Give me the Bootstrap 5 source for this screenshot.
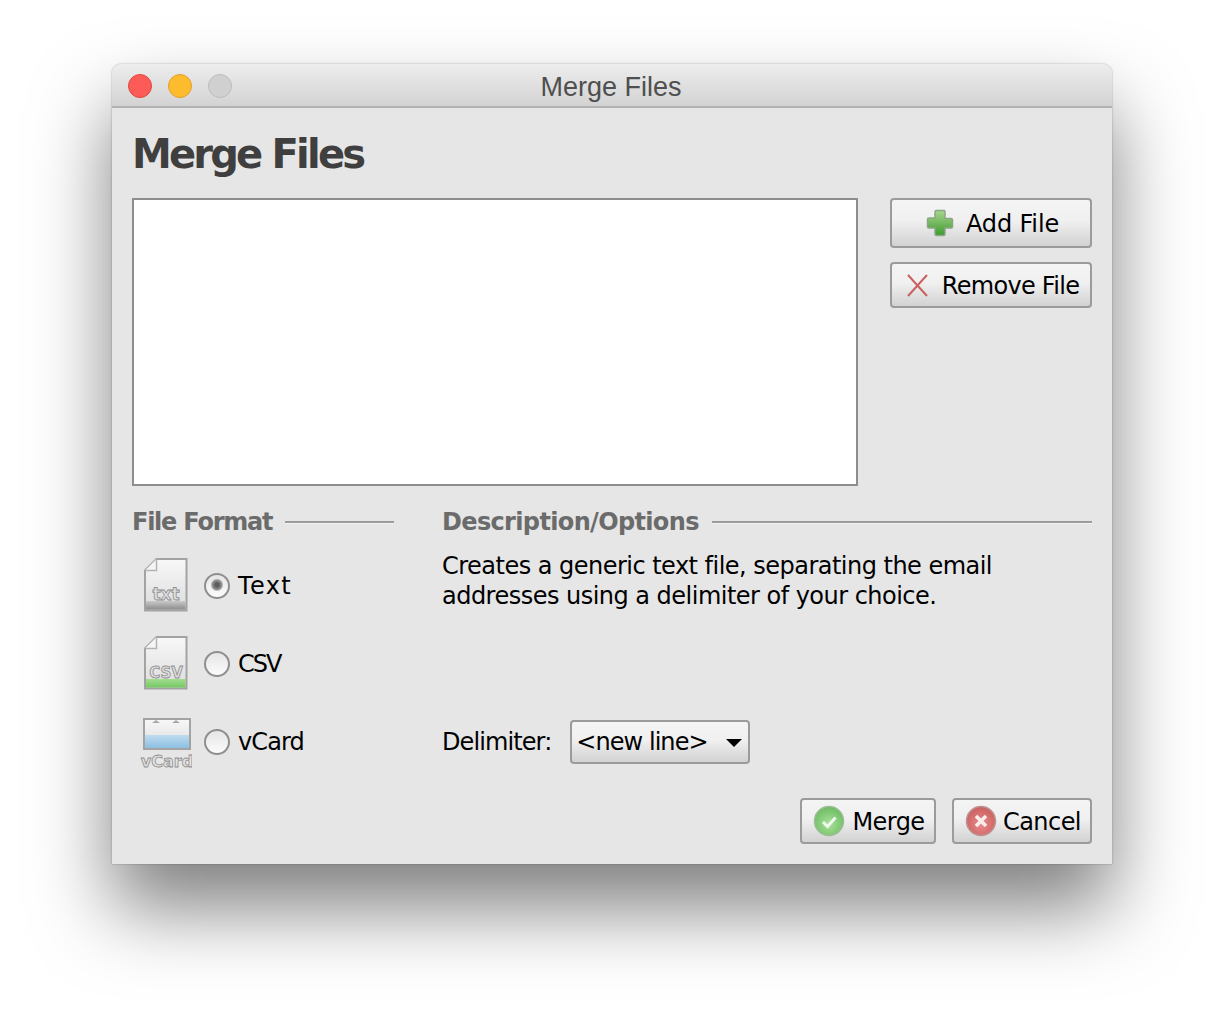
<!doctype html>
<html lang="en"><head><meta charset="utf-8"><title>Merge Files</title>
<link href="https://cdn.jsdelivr.net/npm/bootstrap@5.3.0/dist/css/bootstrap.min.css" rel="stylesheet">
<style>
html,body{height:100%}
body{background:#fff;font-family:"DejaVu Sans","Liberation Sans",sans-serif;padding:64px 112px 0;color:#000}
.win{width:1000px;height:800px;background:#e6e6e6;border-radius:9px 9px 0 0;box-shadow:0 0 2px rgba(0,0,0,.35),0 44px 78px rgba(0,0,0,.5);display:flex;flex-direction:column;overflow:hidden}
.tbar{height:44px;flex:none;background:linear-gradient(#ededed,#d3d3d3);border-bottom:2px solid #b2b2b2;position:relative;padding:2px 0 0 16px;gap:16px}
.light{width:24px;height:24px;border-radius:50%;border:1px solid}
.l-r{background:#fc5b57;border-color:#e2463f}.l-y{background:#fdbc2e;border-color:#e0a028}.l-g{background:#d0d0d0;border-color:#bcbcbc}
.ttl{position:absolute;left:-2px;right:0;top:0;line-height:47px;text-align:center;font-family:"Liberation Sans",sans-serif;font-size:27px;color:#4f4f4f}
.inner{padding:0 20px 20px;flex:1;display:flex;flex-direction:column}
.head{font-size:40px;font-weight:700;color:#3f3f3f;line-height:48px;margin:22px 0 0 0;letter-spacing:-2.8px}
.toprow{margin-top:20px;gap:32px}
.lst{width:726px;height:288px;background:#fff;border:2px solid #8e8e8e}
.side{width:202px;gap:14px}
.mbtn{border:2px solid #9b9b9b;border-radius:4px;background:linear-gradient(#f4f4f4,#f0f0f0 45%,#d2d2d2);color:#000;font-size:24px;padding:2px 0 0 2px;display:flex;align-items:center;justify-content:center;line-height:1;letter-spacing:-.55px;--bs-btn-hover-bg:#eee}
.mbtn svg{margin-top:-2px}
.b-add{height:50px;gap:11px;letter-spacing:-.15px}
.b-rem{height:46px;gap:13px;letter-spacing:-.7px}
.lower{margin-top:20px}
.colfmt{width:262px}.coldesc{width:650px;margin-left:48px}
.sect{font-size:24px;font-weight:700;color:#6b6b6b;line-height:32px;gap:13px;white-space:nowrap}
.sp-f{letter-spacing:-1.25px}.sp-d{letter-spacing:-.65px}
.sect::after{content:"";flex:1;height:2px;background:#9c9c9c;border-bottom:1px solid #f4f4f4;box-sizing:content-box}
.fmt{height:78px;padding-left:8px;font-size:24px}
.fmts{margin-top:9px}
.ico{width:52px;height:58px;flex:none;margin-right:12px;display:block}
.fmt .form-check-input{width:26px;height:26px;margin:0 8px 0 0;border:2px solid #8f8f8f;background:linear-gradient(#e6e6e6,#fbfbfb);float:none;flex:none;box-shadow:none}
.fmt .form-check-input:checked{background:radial-gradient(circle at 50% 45%,#5e5e5e 0 2px,#9a9a9a 5px,transparent 6.500px),linear-gradient(#e6e6e6,#fbfbfb)}
.fmt label{line-height:1}
.ls-t{letter-spacing:1.4px}.ls-c{letter-spacing:-2px}.ls-v{letter-spacing:-.9px}
.dtxt{font-size:24px;line-height:30px;letter-spacing:-.52px;margin:13px 0 0;white-space:nowrap}
.dlim{margin-top:109px;font-size:24px;gap:19px;letter-spacing:-.9px}
.pick{width:180px;height:44px;border:2px solid #9b9b9b;border-radius:4px;background:linear-gradient(#f4f4f4,#f0f0f0 45%,#d2d2d2);font-size:24px;color:#000;letter-spacing:-.95px;padding:0 6px 0 4px;line-height:1}
.caret{width:0;height:0;border:8px solid transparent;border-top:8px solid #000;border-bottom:0;margin-top:2px}
.foot{margin-top:auto;gap:16px}
.b-mrg{width:136px;height:46px;gap:7px}.b-can{width:140px;height:46px;gap:6px}
</style></head><body>
<div class="win">
 <div class="tbar d-flex align-items-center">
  <span class="light l-r"></span><span class="light l-y"></span><span class="light l-g"></span>
  <div class="ttl">Merge Files</div>
 </div>
 <div class="inner">
  <h1 class="head">Merge Files</h1>
  <div class="d-flex toprow">
   <div class="lst"></div>
   <div class="side d-flex flex-column">
    <button class="btn mbtn b-add" type="button"><svg width="30" height="30" viewBox="0 0 30 30"><defs><linearGradient id="gp" x1="0" y1="0" x2="0" y2="1"><stop offset="0" stop-color="#a9d68f"/><stop offset="1" stop-color="#3f9a2e"/></linearGradient></defs><path d="M11 2.500h8a1.500 1.500 0 0 1 1 1.500v6.500h6a1.500 1.500 0 0 1 1.500 1.500v7a1.500 1.500 0 0 1-1.500 1h-6v6a1.500 1.500 0 0 1-1.500 1.500h-7a1.500 1.500 0 0 1-1.500-1.500v-6h-6a1.500 1.500 0 0 1-1.500-1.500v-7a1.500 1.500 0 0 1 1.500-1.500h6V4a1.500 1.500 0 0 1 1.500-1.500z" fill="url(#gp)" stroke="#8aa684" stroke-width="1.500"/></svg>Add File</button>
    <button class="btn mbtn b-rem" type="button"><svg width="24" height="24" viewBox="0 0 24 24"><path d="M3 2 22 23M22 2 3 23" stroke="#c9605f" stroke-width="2" fill="none"/></svg>Remove File</button>
   </div>
  </div>
  <div class="d-flex lower">
   <div class="colfmt">
    <div class="sect sp-f d-flex align-items-center">File Format</div>
    <div class="fmts">
     <div class="fmt d-flex align-items-center"><svg class="ico" viewBox="-3 0 52 58"><defs><linearGradient id="pg" x1="0" y1="0" x2="0" y2="1"><stop offset="0" stop-color="#f8f8f8"/><stop offset="1" stop-color="#dcdcdc"/></linearGradient><linearGradient id="bg" x1="0" y1="0" x2="0" y2="1"><stop offset="0" stop-color="#c9c9c9"/><stop offset="1" stop-color="#8d8d8d"/></linearGradient></defs><path d="M13.500 2h30v51.500H2V13.500z" fill="url(#pg)" stroke="#a3a3a3" stroke-width="2"/><path d="M13.500 2v11.500H2" fill="#f5f5f5" stroke="#b4b4b4" stroke-width="1.500"/><rect x="3" y="44" width="39.500" height="8.500" fill="url(#bg)"/><text x="23" y="43" text-anchor="middle" font-family="DejaVu Sans" font-weight="700" font-size="17" fill="#dedede" stroke="#8f8f8f" stroke-width=".8">txt</text></svg><input class="form-check-input" type="radio" name="fmt" id="r1" checked><label class="ls-t" for="r1">Text</label></div>
     <div class="fmt d-flex align-items-center"><svg class="ico" viewBox="-3 0 52 58"><defs><linearGradient id="cg" x1="0" y1="0" x2="0" y2="1"><stop offset="0" stop-color="#a3dd8f"/><stop offset="1" stop-color="#74c862"/></linearGradient></defs><path d="M13.500 2h30v51.500H2V13.500z" fill="url(#pg)" stroke="#a3a3a3" stroke-width="2"/><path d="M13.500 2v11.500H2" fill="#f5f5f5" stroke="#b4b4b4" stroke-width="1.500"/><rect x="3" y="44" width="39.500" height="8.500" fill="url(#cg)"/><text x="23" y="43" text-anchor="middle" font-family="DejaVu Sans" font-weight="700" font-size="15" fill="#dedede" stroke="#8f8f8f" stroke-width=".8">CSV</text></svg><input class="form-check-input" type="radio" name="fmt" id="r2"><label class="ls-c" for="r2">CSV</label></div>
     <div class="fmt d-flex align-items-center"><svg class="ico" viewBox="-2 -3 52 58"><defs><linearGradient id="vg" x1="0" y1="0" x2="0" y2="1"><stop offset="0" stop-color="#bfdbef"/><stop offset="1" stop-color="#8cc0e2"/></linearGradient></defs><rect x="2" y="3" width="46" height="30" fill="url(#pg)" stroke="#a3a3a3" stroke-width="2"/><rect x="3" y="19" width="44" height="13" fill="url(#vg)"/><path d="M10 7h8l-4-3zM30 7h8l-4-3z" fill="#a8a8a8"/><text x="25" y="51" text-anchor="middle" font-family="DejaVu Sans" font-weight="700" font-size="16" fill="#e4e4e4" stroke="#8f8f8f" stroke-width=".8">vCard</text></svg><input class="form-check-input" type="radio" name="fmt" id="r3"><label class="ls-v" for="r3">vCard</label></div>
    </div>
   </div>
   <div class="coldesc">
    <div class="sect sp-d d-flex align-items-center">Description/Options</div>
    <p class="dtxt">Creates a generic text file, separating the email<br>addresses using a delimiter of your choice.</p>
    <div class="dlim d-flex align-items-center"><span>Delimiter:</span>
     <button class="btn pick d-flex align-items-center justify-content-between" type="button"><span>&lt;new line&gt;</span><span class="caret"></span></button>
    </div>
   </div>
  </div>
  <div class="foot d-flex justify-content-end">
   <button class="btn mbtn b-mrg" type="button"><svg width="32" height="32" viewBox="0 0 32 32"><defs><radialGradient id="gc" cx=".5" cy=".6" r=".6"><stop offset="0" stop-color="#a8e29a"/><stop offset="1" stop-color="#6dbb62"/></radialGradient></defs><circle cx="16" cy="16" r="14.500" fill="url(#gc)" stroke="#9bbd94" stroke-width="1.500"/><path d="M10 17l4.500 4.500 8-9" stroke="#f0f8ee" stroke-width="3" fill="none"/></svg>Merge</button>
   <button class="btn mbtn b-can" type="button"><svg width="32" height="32" viewBox="0 0 32 32"><defs><radialGradient id="rc" cx=".5" cy=".6" r=".6"><stop offset="0" stop-color="#eb8a8a"/><stop offset="1" stop-color="#c95f60"/></radialGradient></defs><circle cx="16" cy="16" r="14.500" fill="url(#rc)" stroke="#bd9494" stroke-width="1.500"/><path d="M11 11l10 10M21 11 11 21" stroke="#f8eeee" stroke-width="3.500" fill="none"/></svg>Cancel</button>
  </div>
 </div>
</div>
<script src="https://cdn.jsdelivr.net/npm/bootstrap@5.3.0/dist/js/bootstrap.bundle.min.js"></script>
</body></html>
